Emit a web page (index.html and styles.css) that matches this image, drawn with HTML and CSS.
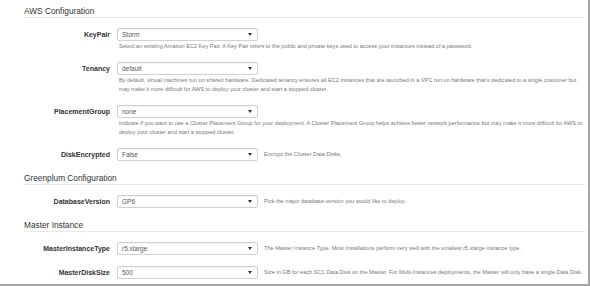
FILE: index.html
```html
<!DOCTYPE html>
<html>
<head>
<meta charset="utf-8">
<link rel="stylesheet" href="styles.css">
</head>
<body>
<div class="frame">
  <section class="section">
    <h2 class="heading first">AWS Configuration</h2>
    <div class="rows">
      <div class="row">
        <label class="label">KeyPair</label>
        <div class="field">
          <div class="select"><span class="value">Storm</span><span class="caret"></span></div>
          <p class="help">Select an existing Amazon EC2 Key Pair. A Key Pair refers to the public and private keys used to access your instances instead of a password.</p>
        </div>
      </div>
      <div class="row">
        <label class="label">Tenancy</label>
        <div class="field">
          <div class="select"><span class="value">default</span><span class="caret"></span></div>
          <p class="help">By default, virtual machines run on shared hardware. Dedicated tenancy ensures all EC2 instances that are launched in a VPC run on hardware that's dedicated to a single customer but may make it more difficult for AWS to deploy your cluster and start a stopped cluster.</p>
        </div>
      </div>
      <div class="row">
        <label class="label">PlacementGroup</label>
        <div class="field">
          <div class="select"><span class="value">none</span><span class="caret"></span></div>
          <p class="help">Indicate if you want to use a Cluster Placement Group for your deployment. A Cluster Placement Group helps achieve better network performance but may make it more difficult for AWS to deploy your cluster and start a stopped cluster.</p>
        </div>
      </div>
      <div class="row">
        <label class="label">DiskEncrypted</label>
        <div class="field inline">
          <div class="select"><span class="value">False</span><span class="caret"></span></div>
          <p class="help">Encrypt the Cluster Data Disks.</p>
        </div>
      </div>
    </div>
  </section>
  <section class="section">
    <h2 class="heading">Greenplum Configuration</h2>
    <div class="rows">
      <div class="row">
        <label class="label">DatabaseVersion</label>
        <div class="field inline">
          <div class="select"><span class="value">GP6</span><span class="caret"></span></div>
          <p class="help">Pick the major database version you would like to deploy.</p>
        </div>
      </div>
    </div>
  </section>
  <section class="section">
    <h2 class="heading">Master Instance</h2>
    <div class="rows">
      <div class="row">
        <label class="label">MasterInstanceType</label>
        <div class="field inline">
          <div class="select"><span class="value">r5.xlarge</span><span class="caret"></span></div>
          <p class="help">The Master Instance Type. Most installations perform very well with the smallest r5.xlarge instance type.</p>
        </div>
      </div>
      <div class="row">
        <label class="label">MasterDiskSize</label>
        <div class="field inline">
          <div class="select"><span class="value">500</span><span class="caret"></span></div>
          <p class="help">Size in GB for each SC1 Data Disk on the Master. For Multi-Instances deployments, the Master will only have a single Data Disk.</p>
        </div>
      </div>
    </div>
  </section>
</div>
</body>
</html>
```

FILE: styles.css
```css
* { box-sizing: border-box; }
html, body { margin: 0; padding: 0; background: #fff; }
body { font-family: "Liberation Sans", Arial, sans-serif; color: #333; }

.frame {
  width: 590px;
  height: 286px;
  border-right: 2px solid #a6a6a6;
  border-bottom: 2px solid #a6a6a6;
  padding: 0 3px 0 24px;
  overflow: hidden;
}

.heading {
  margin: 0;
  font-size: 8.3px;
  font-weight: normal;
  line-height: 12px;
  color: #333;
  border-bottom: 1px solid #e8e8e8;
}
.heading.first { padding-top: 5px; }

.rows {
  display: flex;
  flex-direction: column;
  gap: 11px;
  padding: 10px 0 11px;
}

.row {
  display: flex;
  align-items: flex-start;
}

.label {
  width: 86px;
  flex: none;
  text-align: right;
  font-size: 7px;
  font-weight: bold;
  line-height: 13px;
  color: #333;
  margin-right: 7px;
}

.field { flex: 1; min-width: 0; }
.field.inline { display: flex; align-items: center; }

.select {
  width: 141px;
  height: 13px;
  flex: none;
  display: flex;
  align-items: center;
  justify-content: space-between;
  padding: 0 5px 0 4px;
  border: 1px solid #d0d0d0;
  border-radius: 2px;
  background: #fff;
  box-shadow: inset 0 1px 1px rgba(0,0,0,0.05);
}
.value { font-size: 6.5px; color: #555; line-height: 11px; }
.caret {
  width: 0; height: 0;
  border-top: 3px solid #333;
  border-left: 2px solid transparent;
  border-right: 2px solid transparent;
}

.help {
  margin: 1px 0 0 2px;
  font-size: 5.6px;
  line-height: 9px;
  color: #777;
}
.field.inline .help { margin: 0 0 0 6px; }
```
